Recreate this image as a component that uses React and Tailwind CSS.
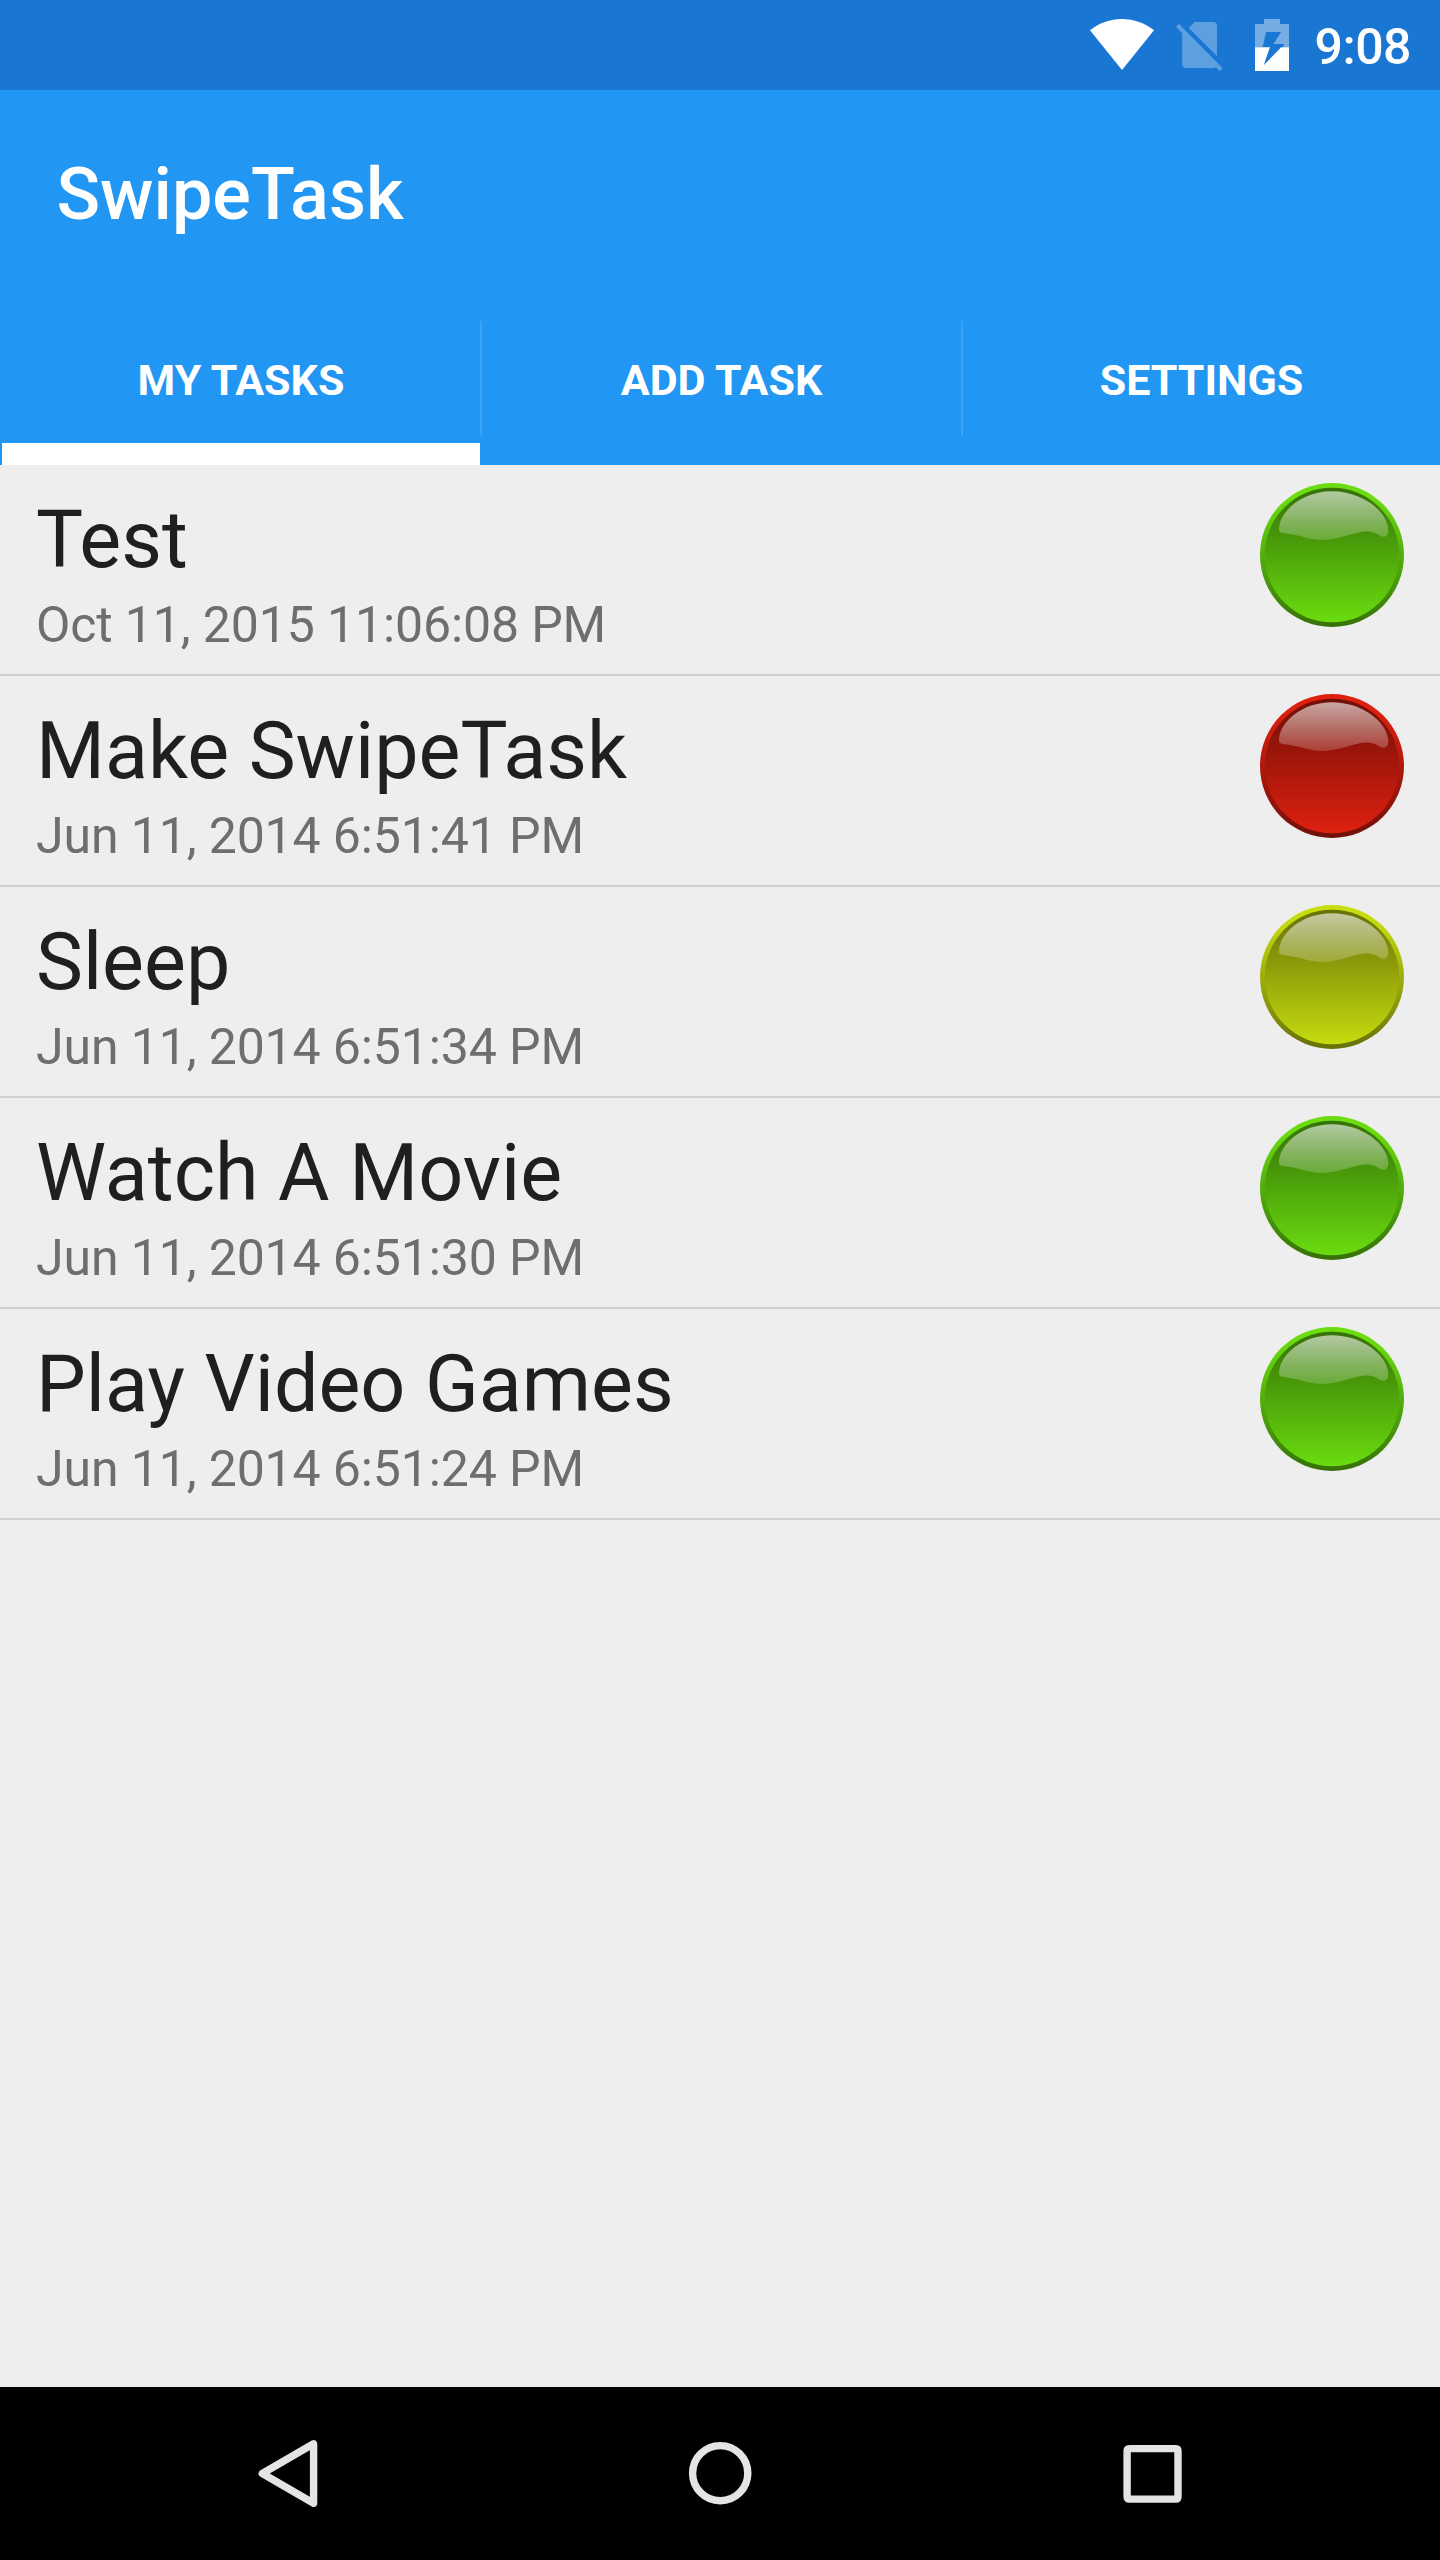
import React from "react";

const TASKS = [
  { title: "Test", date: "Oct 11, 2015 11:06:08 PM", tone: "green" },
  { title: "Make SwipeTask", date: "Jun 11, 2014 6:51:41 PM", tone: "red" },
  { title: "Sleep", date: "Jun 11, 2014 6:51:34 PM", tone: "yellow" },
  { title: "Watch A Movie", date: "Jun 11, 2014 6:51:30 PM", tone: "green" },
  { title: "Play Video Games", date: "Jun 11, 2014 6:51:24 PM", tone: "green" },
];

const TONES = {
  green: { light: "#6adc0f", mid: "#48980a", dark: "#367008" },
  red: { light: "#de200f", mid: "#98150a", dark: "#701008" },
  yellow: { light: "#c6dc0f", mid: "#8a970a", dark: "#667008" },
};

function Orb({ tone, id }) {
  const c = TONES[tone];
  return (
    <svg className="size-36 shrink-0" viewBox="0 0 144 144">
      <defs>
        <linearGradient id={`rim-${id}`} x1="0" y1="0" x2="0" y2="1">
          <stop offset="0.1" stopColor={c.light} />
          <stop offset="0.7" stopColor={c.mid} />
          <stop offset="1" stopColor={c.dark} />
        </linearGradient>
        <linearGradient id={`face-${id}`} x1="0" y1="0" x2="0" y2="1">
          <stop offset="0" stopColor={c.dark} />
          <stop offset="0.37" stopColor={c.mid} />
          <stop offset="1" stopColor={c.light} />
        </linearGradient>
        <linearGradient id={`gloss-${id}`} x1="0" y1="0" x2="0" y2="1">
          <stop offset="0" stopColor="#fff" stopOpacity="0.62" />
          <stop offset="1" stopColor="#fff" stopOpacity="0.18" />
        </linearGradient>
      </defs>
      <circle cx="72" cy="72" r="72" fill={`url(#rim-${id})`} />
      <circle cx="72" cy="72" r="67.3" fill={`url(#face-${id})`} />
      <path
        d="M19 45.5C20 28 42 8.3 72 8.3C102 8.3 127 28 128.2 46C128.6 54 124 55.3 119 52.3C113 48.5 108 47.6 98 49.7C86 52.5 74 57 61.5 57C50 57 43 52.5 23 50C19.5 49.6 18.8 48 19 45.5Z"
        fill={`url(#gloss-${id})`}
      />
    </svg>
  );
}

function StatusBar() {
  return (
    <div className="flex h-[90px] shrink-0 items-start justify-end bg-[#1976d2] pr-[29px] text-white">
      <svg className="mt-[19px] mr-[22px] h-[51px] w-16 shrink-0" viewBox="0 0 64 51">
        <path d="M32 51L0 11.3C9 4 20 0 32 0S55 4 64 11.3Z" fill="#fff" />
      </svg>
      <svg className="mt-[22px] mr-[32px] h-[50px] w-[47px] shrink-0" viewBox="0 0 47 50">
        <g fill="#fff" fillOpacity="0.3">
          <path d="M12.7 6L18.7 0H37.3Q41 0 41 3.7V34Z" />
          <path d="M3 2L46.7 46.3L43.8 49.3L39.8 45.2Q38.8 46 37.3 46H10Q6.2 46 6.2 42.3V11.3L0 4.8Z" />
        </g>
      </svg>
      <svg className="mt-[19px] mr-[22px] h-[52px] w-[34px] shrink-0" viewBox="0 0 34 52">
        <path
          fillRule="evenodd"
          fill="#fff"
          fillOpacity="0.4"
          d="M9 0H25V5H34V28.3H28.5L28.7 25H18.5L26 13H11L7.7 28.3H0V5H9Z"
        />
        <path
          fill="#fff"
          d="M0 28.3H14.9L8.7 46.3L26.2 28.3H34V52H0Z"
        />
      </svg>
      <span className="mt-[18px] w-[100px] text-right text-[50px] leading-[58px] font-medium tracking-[-0.5px]">
        9:08
      </span>
    </div>
  );
}

function Tab({ label, active, width }) {
  return (
    <div className={`flex shrink-0 flex-col ${width}`}>
      <div className="flex h-[141px] items-start justify-center pt-[53px] text-[43px] leading-[50px] font-bold text-white">
        {label}
      </div>
      <div className={active ? "h-[22px] bg-white" : "h-[22px]"} />
    </div>
  );
}

function TabDivider() {
  return <div className="mt-[19px] h-[115px] w-[2px] shrink-0 bg-white/12" />;
}

function NavBar() {
  return (
    <div className="flex h-[173px] shrink-0 items-center justify-between bg-black px-[252px]">
      <svg className="h-[73px] w-[72px]" viewBox="0 0 72 73" fill="none" stroke="#e4e4e4" strokeWidth="7.4" strokeLinejoin="round">
        <path d="M10.3 36.5L61.6 6.8V66.2Z" />
      </svg>
      <svg className="h-[73px] w-[72px]" viewBox="0 0 72 73" fill="none" stroke="#e4e4e4" strokeWidth="7.4">
        <circle cx="36.2" cy="36.2" r="27.6" />
      </svg>
      <svg className="h-[73px] w-[72px]" viewBox="0 0 72 73">
        <path
          fill="#e4e4e4"
          fillRule="evenodd"
          d="M13.4 8H59.7Q65.7 8 65.7 14V59.8Q65.7 65.8 59.7 65.8H13.4Q7.4 65.8 7.4 59.8V14Q7.4 8 13.4 8ZM14.8 15.3V58.5H58.3V15.3Z"
        />
      </svg>
    </div>
  );
}

export default function App() {
  return (
    <div className="flex h-[2560px] w-[1440px] flex-col overflow-hidden bg-[#eeeeee] font-['Roboto',sans-serif]">
      <StatusBar />
      <header className="flex h-[375px] shrink-0 flex-col bg-[#2196f3]">
        <h1 className="h-[212px] pt-[62px] pl-[56.5px] text-[72px] leading-[85px] font-medium text-white">
          SwipeTask
        </h1>
        <nav className="flex h-[163px] pl-[2px]">
          <Tab label="MY TASKS" active width="w-[478px]" />
          <TabDivider />
          <Tab label="ADD TASK" width="w-[479px]" />
          <TabDivider />
          <Tab label="SETTINGS" width="w-[477px]" />
        </nav>
      </header>
      <main className="flex-1">
        {TASKS.map((task, i) => (
          <div
            key={task.title}
            className="flex h-[211px] items-start justify-between border-b-2 border-[#d0d0d0] px-9 pt-[18px]"
          >
            <div className="flex flex-col">
              <span className="mt-[11px] text-[79px] leading-[92px] text-[#1f1f1f]">{task.title}</span>
              <span className="mt-[10px] text-[50px] leading-[58px] tracking-[-0.12px] text-[#6e6e6e]">{task.date}</span>
            </div>
            <Orb tone={task.tone} id={i} />
          </div>
        ))}
      </main>
      <NavBar />
    </div>
  );
}
